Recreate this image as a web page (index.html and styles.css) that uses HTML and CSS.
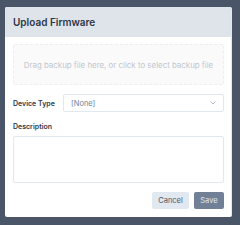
FILE: index.html
```html
<!DOCTYPE html>
<html lang="en">
<head>
  <meta charset="UTF-8" />
  <title>Upload Firmware</title>
  <link rel="stylesheet" href="styles.css">
</head>
<body>
<div class="modal">
  <div class="modal-header">Upload Firmware</div>
  <div class="modal-body">
    <div class="dropzone">Drag backup file here, or click to select backup file</div>
    <div class="row">
      <label class="label">Device Type</label>
      <div class="select">
        <span>[None]</span>
        <svg width="6" height="4" viewBox="0 0 6 4"><path d="M0.5 0.5 L3 3 L5.5 0.5" fill="none" stroke="#a0aec0" stroke-width="0.8"/></svg>
      </div>
    </div>
    <label class="label desc-label">Description</label>
    <div class="textarea"></div>
    <div class="actions">
      <button class="btn btn-cancel">Cancel</button>
      <button class="btn btn-save">Save</button>
    </div>
  </div>
</div>
</body>
</html>
```

FILE: styles.css
```css
* { box-sizing: border-box; }
body {
  margin: 0;
  background: #4a5568;
  font-family: Inter, 'Noto Sans', sans-serif;
  width: 240px;
  height: 225px;
  padding: 7px 0 0 5px;
}
.modal {
  width: 227px;
  height: 210px;
  background: #fff;
  border-radius: 2px;
  border-right: 1px solid #e2e8f0;
  overflow: hidden;
  display: flex;
  flex-direction: column;
}
.modal-header {
  height: 30px;
  background: #dfe3ea;
  padding: 0 8px;
  display: flex;
  align-items: center;
  font-size: 10px;
  font-weight: 600;
  color: #2d3748;
}
.modal-body {
  padding: 7px 7px 0 8px;
  display: flex;
  flex-direction: column;
}
.dropzone {
  height: 41px;
  background: #fafafa;
  border: 1px dashed #eceef2;
  border-radius: 2px;
  display: flex;
  align-items: center;
  justify-content: center;
  font-size: 7.9px;
  color: #c3c7ce;
}
.row {
  display: flex;
  align-items: center;
  margin-top: 9px;
}
.label {
  font-size: 7px;
  font-weight: 600;
  color: #2d3748;
}
.row .label {
  width: 50px;
}
.select {
  flex: 1;
  height: 18px;
  border: 1px solid #e2e8f0;
  border-radius: 2px;
  display: flex;
  align-items: center;
  justify-content: space-between;
  padding: 0 7px 0 7px;
  font-size: 7.5px;
  color: #718096;
}
.desc-label {
  margin-top: 10px;
}
.textarea {
  margin-top: 5px;
  height: 47px;
  border: 1px solid #e2e8f0;
  border-radius: 2px;
}
.actions {
  display: flex;
  justify-content: flex-end;
  gap: 5px;
  margin-top: 9px;
}
.btn {
  height: 17px;
  border: none;
  border-radius: 2px;
  font-family: inherit;
  font-size: 7.5px;
  padding: 0;
}
.btn-cancel {
  width: 37px;
  background: #e2e8f0;
  color: #4a5568;
}
.btn-save {
  width: 30px;
  background: #718096;
  color: #e2e8f0;
}
```
